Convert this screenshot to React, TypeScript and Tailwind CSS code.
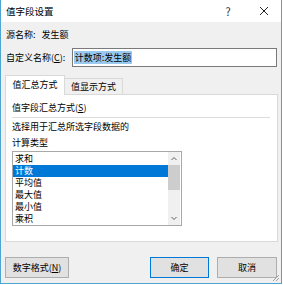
import React from 'react'

const items = ['求和', '计数', '平均值', '最大值', '最小值', '乘积']

export default function App() {
  return (
    <div
      className="w-[283px] h-[285px] bg-white text-[9px] leading-[12px] text-black"
      style={{ fontFamily: '"Noto Sans CJK SC", "Noto Sans", sans-serif' }}
    >
      <div className="w-[282px] h-[284px] border-x border-b border-[#4ea5d2] bg-[#f0f0f0] flex flex-col relative">
        {/* title bar */}
        <div className="h-[22px] bg-white flex items-center pl-[5px] shrink-0">
          <span className="text-[9.5px] flex-1">值字段设置</span>
          <span className="w-[10px] text-center text-[11px] text-[#333] mr-[26px]">?</span>
          <svg width="10" height="10" viewBox="0 0 10 10" className="mr-[12px]">
            <path d="M1 1 L9 9 M9 1 L1 9" stroke="#222" strokeWidth="1" />
          </svg>
        </div>

        <div className="flex flex-col px-[4px]">
          <div className="mt-[5px] h-[16px] flex items-center pl-[1px]">
            <span>源名称:</span>
            <span className="ml-[6px]">发生额</span>
          </div>

          <div className="mt-[5px] h-[19px] flex items-center pl-[1px]">
            <span className="w-[66px]">
              自定义名称(<span className="underline">C</span>):
            </span>
            <div className="w-[206px] h-[19px] bg-white border border-[#7a7a7a] flex items-center pl-[1px]">
              <span className="bg-[#99c9ef] px-[1px] leading-[13px]">计数项:发生额</span>
            </div>
          </div>

          {/* tabs */}
          <div className="mt-[8px] flex items-end h-[20px] relative z-10">
            <div className="w-[60px] h-[20px] bg-white border-x border-t border-[#d9d9d9] flex items-center justify-center pb-[1px]">
              值汇总方式
            </div>
            <div className="w-[58px] h-[17px] border border-l-0 border-[#d9d9d9] border-b-0 flex items-center justify-center">
              值显示方式
            </div>
          </div>

          {/* panel */}
          <div className="-mt-[1px] w-[273px] h-[148px] bg-white border border-[#d9d9d9] flex flex-col px-[6px]">
            <div className="mt-[6px] h-[14px] flex items-center">
              值字段汇总方式(<span className="underline">S</span>)
            </div>
            <div className="mt-[2px] h-px w-[258px] bg-[#dcdcdc]" />
            <div className="mt-[1px] h-[16px] flex items-center">选择用于汇总所选字段数据的</div>
            <div className="h-[16px] flex items-center">计算类型</div>

            <div className="w-[170px] h-[75px] border border-[#a8a8a8] flex">
              <div className="flex-1 flex flex-col pt-[1px]">
                {items.map((t, i) => (
                  <div
                    key={t}
                    className={
                      i === 1
                        ? 'h-[12px] flex items-center pl-[2px] bg-[#0078d7] text-white'
                        : 'h-[12px] flex items-center pl-[2px]'
                    }
                  >
                    {t}
                  </div>
                ))}
              </div>
              <div className="w-[12px] bg-[#f0f0f0] flex flex-col items-center mr-[1px]">
                <svg width="12" height="13" viewBox="0 0 12 13">
                  <path d="M3.5 8 L6 5.5 L8.5 8" stroke="#606060" strokeWidth="1" fill="none" />
                </svg>
                <div className="w-[12px] h-[25px] bg-[#cdcdcd]" />
                <div className="flex-1" />
                <svg width="12" height="13" viewBox="0 0 12 13">
                  <path d="M3.5 5 L6 7.5 L8.5 5" stroke="#606060" strokeWidth="1" fill="none" />
                </svg>
              </div>
            </div>
          </div>

          {/* buttons */}
          <div className="mt-[15px] flex items-center">
            <button className="w-[64px] h-[21px] bg-[#e1e1e1] border border-[#adadad] text-[9px] flex items-center justify-center">
              数字格式(<span className="underline">N</span>)
            </button>
            <div className="flex-1" />
            <button className="w-[59px] h-[21px] bg-[#e1e1e1] border border-[#0078d7] text-[9px] flex items-center justify-center mr-[8px]">
              确定
            </button>
            <button className="w-[60px] h-[21px] bg-[#e1e1e1] border border-[#adadad] text-[9px] flex items-center justify-center">
              取消
            </button>
          </div>
        </div>

        {/* resize grip */}
        <svg width="8" height="8" viewBox="0 0 8 8" className="absolute right-[1px] bottom-[1px]">
          <path d="M7 1 L1 7 M7 4 L4 7 M7 7 L7 7" stroke="#a0a0a0" strokeWidth="1" />
        </svg>
      </div>
    </div>
  )
}
